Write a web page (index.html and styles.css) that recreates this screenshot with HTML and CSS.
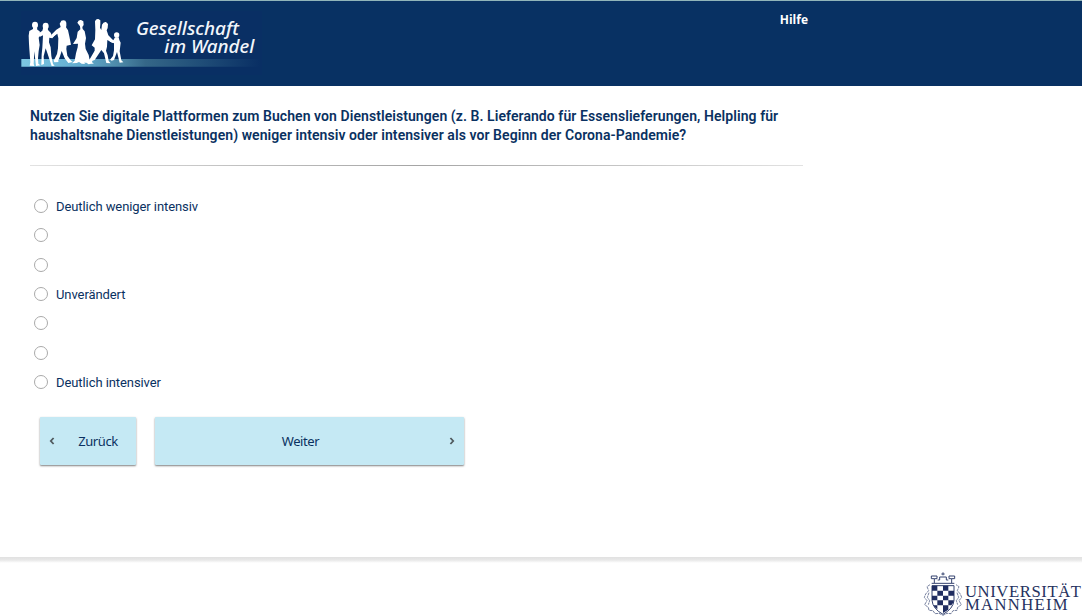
FILE: index.html
```html
<!DOCTYPE html>
<html lang="de">
<head>
<meta charset="utf-8">
<title>Gesellschaft im Wandel</title>
<link rel="stylesheet" href="styles.css">
</head>
<body>
<header class="header">
  <svg class="brand" viewBox="63 33 723 192" role="img" aria-label="Gesellschaft im Wandel">
    <defs>
      <linearGradient id="band" x1="0" x2="1" y1="0" y2="0">
        <stop offset="0" stop-color="#7dc7e2"/>
        <stop offset=".25" stop-color="#62acd0"/>
        <stop offset=".42" stop-color="#4b86a5"/>
        <stop offset=".52" stop-color="#356788"/>
        <stop offset=".75" stop-color="#204e78"/>
        <stop offset="1" stop-color="#092f64"/>
      </linearGradient>
    </defs>
    <path class="brand-bg" d="M63 33h723v192H63z"/>
    <path fill="url(#band)" d="M64 177h716v23H64z"/>
    <g class="people">
      <ellipse cx="105" cy="75" rx="9" ry="10"/>
      <path d="M99 82h12l1 7 7 5 2 12-5 7 3 22-3 18-2 22 1 16 6 5-13 2-5-44-2 38 2 6-14-1 2-10-3-40-1-16-1-24 2-14 11-6z"/>
      <ellipse cx="137" cy="78" rx="9" ry="10"/>
      <path d="M130 82h13l1 8 8 8 3 8 13-5-11 14-9-2-1 14 5 15 2 26 5 24 5 5-9 1-13-39-5-14-6 24 1 23-8 3 1-32 2-20 1-17 1-20-9 4-7-8 14-10z"/>
      <path d="M179 71l5-9q13-4 15 6v9l-1 5 6 9 4 18 5 25-13 3-1 10 3 20 11 15 5 4-13 3-11-14-9-22-5 16-6 15 3 2-14 1-2-5 10-20 3-17 1-30-3-14-13 10-5-7 15-15 13-8z"/>
      <path d="M232 68q3-9 11-8l7 4 1 11-4 6 1 6 6 7 4 20-3 17 2 16 9 18 4 20 10 5-14 3-7-5-7 0 4 4-11-1-8-5-7 3-14 1 8-8 4-22 5-18 1-11-15 1 11-18 3-19 8-7-1-9z"/>
      <path d="M285 64q3-8 10-7l6 4v12l-1 10 5 9-1 36-10 22-16 28-2 9 6 4-15-2-1-6 18-31v-9l-9-7 10-18 1-28z"/>
      <path d="M306 74q4-9 12-8l6 6-1 12-3 7 5 15 16 16-3 7-16-9-1 20-3 12 5 14 3 17 6 7-13-1-7-29-8-10-20 30-11 4-1-5 15-30 1-23 3-18 7-15 6-4z"/>
      <ellipse cx="350" cy="105" rx="8" ry="8"/>
      <path d="M345 112h11l2 8 4 8-3 26 5 27 6 6-11 1-8-32-9 24-7 2-5-3 9-11 3-17v-21l-12-5-4-10 14 6z"/>
    </g>
    <text class="brand-text" x="408" y="106" textLength="309" lengthAdjust="spacingAndGlyphs">Gesellschaft</text>
    <text class="brand-text" x="493" y="160" textLength="270" lengthAdjust="spacingAndGlyphs">im Wandel</text>
  </svg>
  <a class="help">Hilfe</a>
</header>
<main class="main">
  <h1 class="question">Nutzen Sie digitale Plattformen zum Buchen von Dienstleistungen (z. B. Lieferando für Essenslieferungen, Helpling für<br>haushaltsnahe Dienstleistungen) weniger intensiv oder intensiver als vor Beginn der Corona-Pandemie?</h1>
  <div class="rule"></div>
  <div class="options">
    <label class="option"><input class="radio" type="radio" name="q"><span class="option-text">Deutlich weniger intensiv</span></label>
    <label class="option"><input class="radio" type="radio" name="q"></label>
    <label class="option"><input class="radio" type="radio" name="q"></label>
    <label class="option"><input class="radio" type="radio" name="q"><span class="option-text">Unverändert</span></label>
    <label class="option"><input class="radio" type="radio" name="q"></label>
    <label class="option"><input class="radio" type="radio" name="q"></label>
    <label class="option"><input class="radio" type="radio" name="q"><span class="option-text">Deutlich intensiver</span></label>
  </div>
  <div class="actions">
    <button class="button back"><svg class="chevron" viewBox="0 0 6 8"><path d="M4.6 1 1.8 4l2.8 3"/></svg><span class="button-label">Zurück</span></button>
    <button class="button next"><span class="button-label">Weiter</span><svg class="chevron" viewBox="0 0 6 8"><path d="m1.4 1 2.8 3-2.8 3"/></svg></button>
  </div>
</main>
<footer class="footer">
  <svg class="uni" viewBox="36 60 480 138" role="img" aria-label="Universität Mannheim">
    <g class="crest-line">
      <path d="M65 100h68M73 99V86h-9v-8h17v8h-8M125 99V86h9v-8h-17v8h8M83 90h6v-9h20v9h6M99 67v9M94 72h10"/>
      <path d="M66 107v44q2 25 33 42 31-17 33-42v-44z"/>
    </g>
    <g class="crest-mantle">
      <path d="M60 104l-9 6 5 12-9 10-4 10 8 10-7 12 11 8 2 9 12 1 6 9 12-1 12 6 12-6 12 1 6-9 12-1 2-9 11-8-7-12 8-10-4-10-9-10 5-12-9-6M57 128l-5 14 7 10-4 12M141 128l5 14-7 10 4 12"/>
    </g>
    <path class="crest-fill" d="M66 107h16v15H66zM99 107h16v15H99zM82 122h17v15H82zM115 122h17v15h-17zM66 137h16v14H66zM99 137h16v14H99zM82 151h17v15H82zM115 151h17q-2 9-8 15h-9zM70 166h12v12q-8-5-12-12zM99 166h16v13l-16 10z"/>
    <text class="uni-text" x="165" y="142" textLength="348" lengthAdjust="spacing">UNIVERSITÄT</text>
    <text class="uni-text" x="165" y="181" textLength="308" lengthAdjust="spacing">MANNHEIM</text>
  </svg>
</footer>
</body>
</html>
```
FILE: styles.css
```css
* { box-sizing: border-box; }
body {
  margin: 0;
  height: 616px;
  display: flex;
  flex-direction: column;
  overflow: hidden;
  background: #fff;
  color: #0a3161;
  font-family: Roboto, sans-serif;
}
.header {
  height: 86px;
  flex: none;
  display: flex;
  align-items: flex-start;
  justify-content: space-between;
  padding: 10px 274px 0 21px;
  border-top: 1px solid #91b5b9;
  background: #083163;
}
.brand { width: 241px; height: 64px; }
.brand-bg { fill: #092f64; }
.people { fill: #fff; }
.brand-text {
  fill: #f2f6fb;
  font: italic 500 54px "Noto Sans", "Open Sans", sans-serif;
}
.help {
  color: #fff;
  font: 700 12px/18px "Open Sans", sans-serif;
}
.main { flex: 1; padding: 21px 30px 0; }
.question {
  margin: 0;
  font-size: 14px;
  line-height: 19px;
  font-weight: 600;
  letter-spacing: .07px;
  white-space: nowrap;
}
.rule {
  width: 773px;
  height: 1px;
  margin-top: 20px;
  background: linear-gradient(90deg, #e2e2e2, #a5a5a5 50%, #e2e2e2);
}
.options { padding: 25.2px 0 0 4px; }
.option {
  display: flex;
  align-items: center;
  gap: 8px;
  height: 29.35px;
  font-size: 13px;
  letter-spacing: -.08px;
}
.option-text { padding-top: 1px; }
.radio {
  appearance: none;
  width: 14px;
  height: 14px;
  margin: 0;
  border: 1px solid #aaa;
  border-radius: 50%;
}
.actions { display: flex; gap: 19px; padding: 20.3px 0 0 10px; }
.button {
  display: flex;
  align-items: center;
  height: 48px;
  padding: 0 9px;
  border: 0;
  border-radius: 1px;
  background: #c5e9f4;
  box-shadow: 0 1px 2px rgba(0, 0, 0, .5);
  color: #0a3161;
  font: 13px "Noto Sans", sans-serif;
  letter-spacing: -.4px;
}
.back { width: 96px; }
.next { width: 309px; }
.button-label { flex: 1; text-align: center; }
.back .button-label { padding-left: 14px; }
.next .button-label { padding-right: 12px; }
.chevron {
  width: 6px;
  height: 8px;
  fill: none;
  stroke: #505a5e;
  stroke-width: 1.8;
}
.footer {
  height: 59px;
  flex: none;
  display: flex;
  justify-content: flex-end;
  align-items: flex-start;
  padding-top: 13px;
  background: linear-gradient(#e1e1e1, #e8e8e8 3px, #fff 6px);
}
.uni { width: 160px; height: 46px; }
.crest-line { fill: none; stroke: #35436f; stroke-width: 3; }
.crest-mantle { fill: none; stroke: #5b678b; stroke-width: 2.5; stroke-dasharray: 9 2; }
.crest-fill { fill: #202d60; }
.uni-text {
  fill: #263260;
  font: 50px "Liberation Serif", serif;
}
```
